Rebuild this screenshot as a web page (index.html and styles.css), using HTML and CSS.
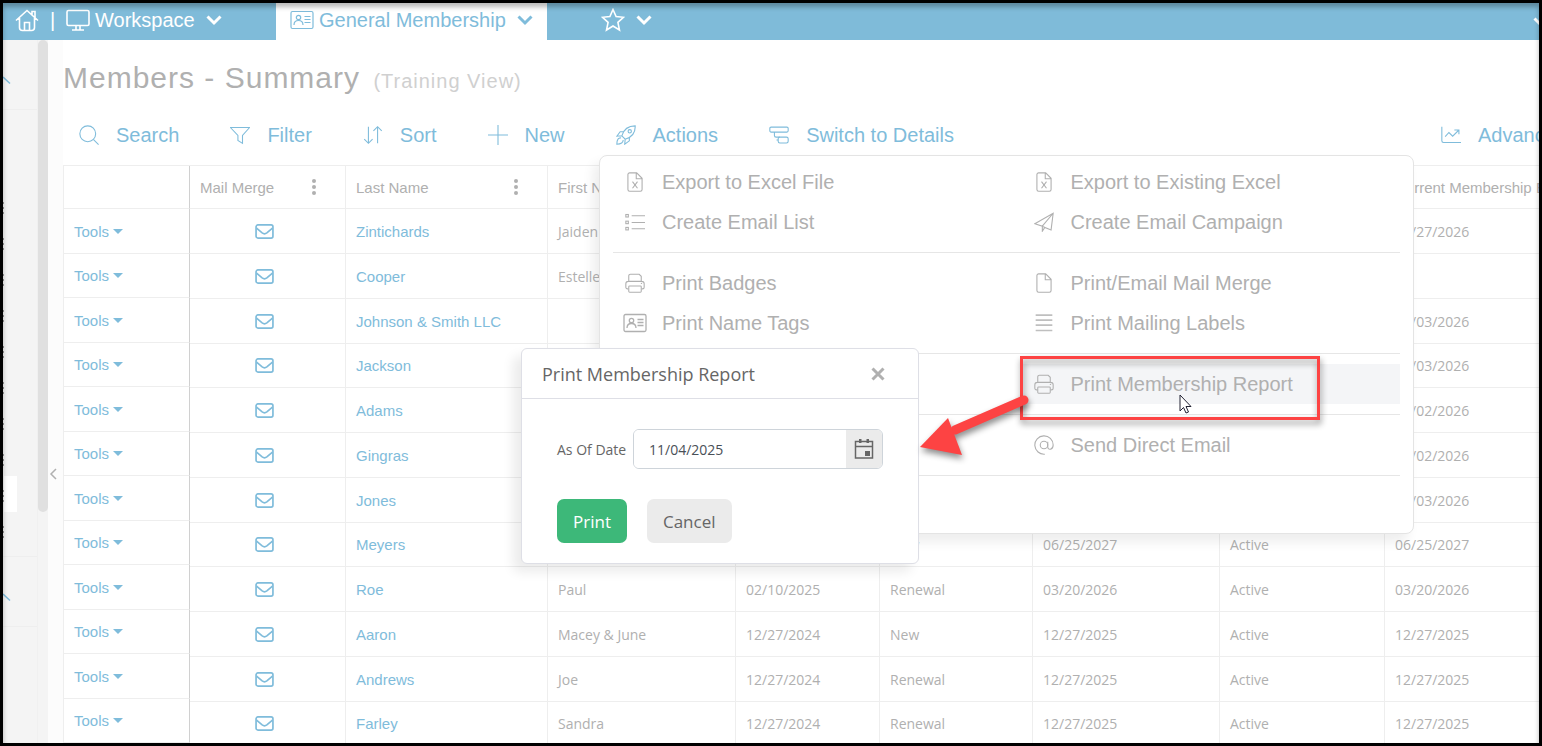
FILE: index.html
```html
<!DOCTYPE html>
<html lang="en">
<head>
    <meta charset="UTF-8">
    <meta name="viewport" content="width=device-width, initial-scale=1.0">
    <title>Members - Summary</title>
    <link rel="stylesheet" href="styles.css">
</head>
<body>
    <svg class="icon-defs" aria-hidden="true">
        <symbol id="i-home" viewBox="0 0 24 24"><path d="M1 12.5L12 2.5l11 10M4.500 10v9.500a3 3 0 0 0 3 3h9a3 3 0 0 0 3-3V10M9.500 22v-7.500h5V22M17 6.500V3.500h3v6"/></symbol>
        <symbol id="i-monitor" viewBox="0 0 24 24"><rect x="1" y="2.500" width="22" height="15" rx="1.500"/><path d="M10 18v4M14 18v4M6 22h12"/></symbol>
        <symbol id="i-card" viewBox="0 0 24 24"><rect x="1" y="3.500" width="22" height="17" rx="1.500"/><circle cx="8.500" cy="9.500" r="2.200"/><path d="M4 17c0-6 9-6 9 0M14.500 8.500h6M14.500 11.500h6M14.500 14.500h6"/></symbol>
        <symbol id="i-down" viewBox="0 0 16 16"><path d="M1.500 4.500L8 11l6.500-6.500"/></symbol>
        <symbol id="i-star" viewBox="0 0 24 24"><path d="M12 1.500l3.100 7 7.400.800-5.600 5 1.600 7.700L12 18l-6.500 4 1.600-7.700-5.600-5 7.400-.8z"/></symbol>
        <symbol id="i-search" viewBox="0 0 24 24"><circle cx="10.500" cy="10.500" r="9.500"/><path d="M17.500 17.500l6 6"/></symbol>
        <symbol id="i-filter" viewBox="0 0 24 24"><path d="M.500 3h23L15 12.500V22l-5.500-3.500v-6z"/></symbol>
        <symbol id="i-sort" viewBox="0 0 24 24"><path d="M6.500 2v20M1.500 17L6.500 22l5-5M17.500 22V2M12.500 7L17.500 2l5 5"/></symbol>
        <symbol id="i-plus" viewBox="0 0 24 24"><path d="M12 0v24M0 12h24"/></symbol>
        <symbol id="i-rocket" viewBox="0 0 24 24"><path d="M7 13C9 6 14 1 23 1 23.500 10 18 15 11 17zM9.500 8H5L1 13.500 7 13M16 14.500V19l-5.500 4 .500-6M6 15.500c-3-.5-5 2-5 7.500 5 0 8-2 7.500-5"/><circle cx="16.500" cy="7.500" r="2"/></symbol>
        <symbol id="i-switch" viewBox="0 0 24 24"><rect x="1" y="2.500" width="22" height="6" rx="1.500"/><rect x="11" y="14.500" width="12" height="7" rx="2"/><path d="M6.500 8.500v4a2 2 0 0 0 2 2H13M11 18H9"/></symbol>
        <symbol id="i-chart" viewBox="0 0 24 24"><path d="M1 2v17a2 2 0 0 0 2 2h21M5 14l4.500-5 4.500 4.500L21.500 6M16 6h5.500v5"/></symbol>
        <symbol id="i-excel" viewBox="0 0 24 24"><path d="M5.500 1h8.500l6.500 6.500V21a2 2 0 0 1-2 2h-13a2 2 0 0 1-2-2V3a2 2 0 0 1 2-2zM13.500 1v7h7M9 11.500l6 8M15 11.500l-6 8"/></symbol>
        <symbol id="i-page" viewBox="0 0 24 24"><path d="M5.500 1h8.500l6.500 6.500V21a2 2 0 0 1-2 2h-13a2 2 0 0 1-2-2V3a2 2 0 0 1 2-2zM13.500 1v7h7"/></symbol>
        <symbol id="i-list" viewBox="0 0 24 24"><rect x="1" y="3" width="3" height="3"/><rect x="1" y="11" width="3" height="3"/><rect x="1" y="18.500" width="3" height="3"/><path d="M8 4.500h16M8 12.500h16M8 20h16"/></symbol>
        <symbol id="i-plane" viewBox="0 0 24 24"><path d="M1 14L23 1.500 20.500 21.500 13 18.500 10 23V17zM23 1.500L10 17l3 1.500"/></symbol>
        <symbol id="i-printer" viewBox="0 0 24 24"><path d="M4.500 10V3.500a2 2 0 0 1 2-2h10.500l2.500 2.500v6M4 19H3a2 2 0 0 1-2-2v-4a3 3 0 0 1 3-3h16a3 3 0 0 1 3 3v4a2 2 0 0 1-2 2h-1"/><rect x="4.500" y="15.500" width="15" height="7.500" rx="1"/><path d="M19 12.500h1.500"/></symbol>
        <symbol id="i-lines" viewBox="0 0 24 24"><path d="M2 2.500h20M2 8.500h20M2 14.500h20M2 21h20"/></symbol>
        <symbol id="i-at" viewBox="0 0 24 24"><circle cx="12" cy="12" r="4.500"/><path d="M16.500 8v6.500c0 4 6.500 3.500 6.500-2.500A11 11 0 1 0 13 23"/></symbol>
        <symbol id="i-mail" viewBox="0 0 20 16"><rect x="1" y="1" width="18" height="14" rx="2"/><path d="M1.500 4.500l6 5c2 1.500 3 1.500 5 0l6-5"/></symbol>
        <symbol id="i-calendar" viewBox="0 0 20 20"><path d="M1.500 2.500h17v16.500h-17zM1.500 7.500h17"/><path d="M5 0h2.500v4H5zM12.500 0H15v4h-2.500zM11 12h5v5h-5z" fill="currentColor" stroke="none"/></symbol>
    </svg>

    <header class="topbar">
        <nav class="topbar-main">
            <a href="#" aria-label="Home"><svg class="icon icon-top"><use href="#i-home"/></svg></a>
            <span class="topbar-sep">|</span>
            <button class="top-button"><svg class="icon icon-top"><use href="#i-monitor"/></svg>Workspace<svg class="icon icon-down"><use href="#i-down"/></svg></button>
        </nav>
        <button class="top-button tab"><svg class="icon icon-top"><use href="#i-card"/></svg>General Membership<svg class="icon icon-down"><use href="#i-down"/></svg></button>
        <button class="top-button favorites" aria-label="Favorites"><svg class="icon icon-top"><use href="#i-star"/></svg><svg class="icon icon-down"><use href="#i-down"/></svg></button>
        <button class="top-button more" aria-label="More"><svg class="icon icon-down"><use href="#i-down"/></svg></button>
    </header>

    <div class="page">
        <aside class="sidebar">
            <div class="side-panels">
                <div class="side-panel side-panel-head"><svg class="side-chevron" viewBox="0 0 8 8"><path d="M0 1l7 6.500"/></svg></div>
                <div class="side-panel side-panel-list">
                    <div class="side-dots"></div>
                    <div class="side-item"></div>
                </div>
                <div class="side-panel side-panel-head"><svg class="side-chevron" viewBox="0 0 8 8"><path d="M0 1l7 6.500"/></svg></div>
            </div>
            <div class="scroll-thumb"></div>
        </aside>
        <button class="collapse" aria-label="Collapse"><svg viewBox="0 0 8 12"><path d="M7 1L2 6l5 5"/></svg></button>

        <main class="content">
            <h1>Members - Summary <small>(Training View)</small></h1>
            <div class="toolbar">
                <button><svg class="icon"><use href="#i-search"/></svg>Search</button>
                <button><svg class="icon"><use href="#i-filter"/></svg>Filter</button>
                <button><svg class="icon"><use href="#i-sort"/></svg>Sort</button>
                <button><svg class="icon"><use href="#i-plus"/></svg>New</button>
                <button><svg class="icon"><use href="#i-rocket"/></svg>Actions</button>
                <button><svg class="icon"><use href="#i-switch"/></svg>Switch to Details</button>
                <button class="advanced"><svg class="icon"><use href="#i-chart"/></svg>Advanced</button>
            </div>

            <div class="grid">
                <table class="grid-tools">
                    <thead><tr><th></th></tr></thead>
                    <tbody>
                        <tr><td><button>Tools</button></td></tr>
                        <tr><td><button>Tools</button></td></tr>
                        <tr><td><button>Tools</button></td></tr>
                        <tr><td><button>Tools</button></td></tr>
                        <tr><td><button>Tools</button></td></tr>
                        <tr><td><button>Tools</button></td></tr>
                        <tr><td><button>Tools</button></td></tr>
                        <tr><td><button>Tools</button></td></tr>
                        <tr><td><button>Tools</button></td></tr>
                        <tr><td><button>Tools</button></td></tr>
                        <tr><td><button>Tools</button></td></tr>
                        <tr><td><button>Tools</button></td></tr>
                    </tbody>
                </table>
                <table class="grid-data">
                    <colgroup>
                        <col class="col-mail"><col class="col-last"><col class="col-first"><col class="col-joined"><col class="col-type"><col class="col-expires"><col class="col-status"><col class="col-current">
                    </colgroup>
                    <thead>
                        <tr>
                            <th><div class="th-inner">Mail Merge<span class="dots"></span></div></th>
                            <th><div class="th-inner">Last Name<span class="dots"></span></div></th>
                            <th>First Name</th>
                            <th></th>
                            <th></th>
                            <th></th>
                            <th></th>
                            <th>Current Membership Expires</th>
                        </tr>
                    </thead>
                    <tbody>
                        <tr><td class="mail"><svg><use href="#i-mail"/></svg></td><td><a href="#">Zintichards</a></td><td>Jaiden</td><td></td><td></td><td></td><td></td><td>12/27/2026</td></tr>
                        <tr><td class="mail"><svg><use href="#i-mail"/></svg></td><td><a href="#">Cooper</a></td><td>Estelle</td><td></td><td></td><td></td><td></td><td></td></tr>
                        <tr><td class="mail"><svg><use href="#i-mail"/></svg></td><td><a href="#">Johnson &amp; Smith LLC</a></td><td></td><td></td><td></td><td></td><td></td><td>11/03/2026</td></tr>
                        <tr><td class="mail"><svg><use href="#i-mail"/></svg></td><td><a href="#">Jackson</a></td><td></td><td></td><td></td><td></td><td></td><td>11/03/2026</td></tr>
                        <tr><td class="mail"><svg><use href="#i-mail"/></svg></td><td><a href="#">Adams</a></td><td></td><td></td><td></td><td></td><td></td><td>11/02/2026</td></tr>
                        <tr><td class="mail"><svg><use href="#i-mail"/></svg></td><td><a href="#">Gingras</a></td><td></td><td></td><td></td><td></td><td></td><td>11/02/2026</td></tr>
                        <tr><td class="mail"><svg><use href="#i-mail"/></svg></td><td><a href="#">Jones</a></td><td></td><td></td><td></td><td></td><td></td><td>11/03/2026</td></tr>
                        <tr><td class="mail"><svg><use href="#i-mail"/></svg></td><td><a href="#">Meyers</a></td><td></td><td></td><td>New</td><td>06/25/2027</td><td>Active</td><td>06/25/2027</td></tr>
                        <tr><td class="mail"><svg><use href="#i-mail"/></svg></td><td><a href="#">Roe</a></td><td>Paul</td><td>02/10/2025</td><td>Renewal</td><td>03/20/2026</td><td>Active</td><td>03/20/2026</td></tr>
                        <tr><td class="mail"><svg><use href="#i-mail"/></svg></td><td><a href="#">Aaron</a></td><td>Macey &amp; June</td><td>12/27/2024</td><td>New</td><td>12/27/2025</td><td>Active</td><td>12/27/2025</td></tr>
                        <tr><td class="mail"><svg><use href="#i-mail"/></svg></td><td><a href="#">Andrews</a></td><td>Joe</td><td>12/27/2024</td><td>Renewal</td><td>12/27/2025</td><td>Active</td><td>12/27/2025</td></tr>
                        <tr><td class="mail"><svg><use href="#i-mail"/></svg></td><td><a href="#">Farley</a></td><td>Sandra</td><td>12/27/2024</td><td>Renewal</td><td>12/27/2025</td><td>Active</td><td>12/27/2025</td></tr>
                    </tbody>
                </table>
            </div>
        </main>
    </div>

    <div class="actions-menu">
        <div class="menu-group">
            <button><svg class="icon"><use href="#i-excel"/></svg>Export to Excel File</button>
            <button><svg class="icon"><use href="#i-excel"/></svg>Export to Existing Excel</button>
            <button><svg class="icon"><use href="#i-list"/></svg>Create Email List</button>
            <button><svg class="icon"><use href="#i-plane"/></svg>Create Email Campaign</button>
        </div>
        <div class="menu-group">
            <button><svg class="icon"><use href="#i-printer"/></svg>Print Badges</button>
            <button><svg class="icon"><use href="#i-page"/></svg>Print/Email Mail Merge</button>
            <button><svg class="icon icon-card"><use href="#i-card"/></svg>Print Name Tags</button>
            <button><svg class="icon icon-lines"><use href="#i-lines"/></svg>Print Mailing Labels</button>
        </div>
        <div class="menu-group">
            <button class="right active"><svg class="icon"><use href="#i-printer"/></svg>Print Membership Report</button>
        </div>
        <div class="menu-group">
            <button class="right"><svg class="icon"><use href="#i-at"/></svg>Send Direct Email</button>
        </div>
        <div class="menu-group"></div>
    </div>

    <form class="dialog" role="dialog" aria-labelledby="dialog-title">
        <div class="dialog-header">
            <h2 id="dialog-title">Print Membership Report</h2>
            <button type="button" class="close" aria-label="Close"><svg viewBox="0 0 14 14"><path d="M1.500 1.500l11 11M12.500 1.500l-11 11"/></svg></button>
        </div>
        <div class="dialog-body">
            <div class="field">
                <label for="as-of-date">As Of Date</label>
                <div class="date-box">
                    <input type="text" id="as-of-date" value="11/04/2025">
                    <button type="button" aria-label="Open calendar"><svg><use href="#i-calendar"/></svg></button>
                </div>
            </div>
            <div class="dialog-buttons">
                <button type="button" class="print">Print</button>
                <button type="button" class="cancel">Cancel</button>
            </div>
        </div>
    </form>

    <div class="callout"></div>
    <svg class="arrow" viewBox="0 0 120 70" aria-hidden="true">
        <path d="M109 13L40 43" stroke="#fd4343" stroke-width="9" stroke-linecap="round"/>
        <path d="M5 60L33 31 47 68z" fill="#fd4343"/>
    </svg>
    <svg class="pointer" viewBox="0 0 13 20" aria-hidden="true">
        <path d="M1 1v16l3.500-3.500 2.500 5.500 2.500-1-2.500-5.500H12z" fill="#fff" stroke="#223" stroke-width="1"/>
    </svg>
</body>
</html>
```

FILE: styles.css
```css
* {
    box-sizing: border-box;
}
body {
    position: relative;
    display: flex;
    flex-direction: column;
    height: 100vh;
    margin: 0;
    border: 3px solid #000;
    overflow: hidden;
    background-color: #fff;
    color: #b0b0b0;
    font-family: Arial, "Liberation Sans", sans-serif;
    font-size: 15px;
}
/* inner shadow of the frame */
body::after {
    content: "";
    position: absolute;
    inset: 0;
    box-shadow: inset 0 4px 5px rgba(0, 0, 0, .28);
    pointer-events: none;
}
button {
    padding: 0;
    border: none;
    background: none;
    color: inherit;
    font: inherit;
    white-space: nowrap;
    cursor: pointer;
}
a {
    color: #7fbcdb;
    text-decoration: none;
}
svg {
    display: block;
    flex: none;
    fill: none;
    stroke: currentColor;
}
.icon-defs {
    position: absolute;
    width: 0;
    height: 0;
}
.icon {
    width: 20px;
    height: 20px;
    stroke-width: 1.3;
}

/* top bar */
.topbar {
    display: flex;
    flex: none;
    height: 37px;
    background-color: #7fbbd9;
    color: #fff;
    font-size: 20px;
}
.topbar a {
    color: #fff;
}
.topbar-main {
    display: flex;
    align-items: center;
    width: 273px;
    padding: 0 0 3px 12px;
}
.topbar-sep {
    width: 27px;
    text-align: center;
}
.icon-top {
    width: 24px;
    height: 24px;
    stroke-width: 1.6;
}
.icon-down {
    width: 16px;
    height: 16px;
    margin-left: 6px;
    stroke-width: 3;
}
.top-button {
    display: flex;
    align-items: center;
    gap: 5px;
}
.tab {
    width: 271px;
    padding: 0 0 3px 14px;
    background-color: #fff;
    color: #7fbcdb;
}
.tab .icon-top {
    stroke-width: 1.2;
}
.favorites {
    padding: 0 0 3px 54px;
}
.more {
    margin-left: auto;
    margin-right: -10px;
}

/* left side */
.page {
    display: flex;
    flex: 1;
    min-height: 0;
}
.sidebar {
    display: flex;
    flex: none;
    width: 45px;
    background-color: #f4f4f4;
}
.side-panels {
    width: 35px;
    border-right: 1px solid #f0f0f0;
}
.side-panel {
    border-bottom: 1px solid #eee;
}
.side-panel-head {
    height: 70px;
    padding-top: 36px;
}
.side-panel-list {
    display: flex;
    align-items: flex-start;
    height: 447px;
}
.side-dots {
    width: 1px;
    height: 360px;
    margin-top: 80px;
    background-image: linear-gradient(transparent 12px, #999 12px, #999 14px, transparent 14px, transparent 17px, #999 17px, #999 19px, transparent 19px, transparent 22px, #999 22px, #999 24px, transparent 24px);
    background-size: 1px 36px;
}
.side-item {
    width: 13px;
    height: 36px;
    margin-top: 366px;
    background-color: #fff;
}
.side-chevron {
    width: 8px;
    height: 8px;
    color: #7fbcdb;
    stroke-width: 1.5;
}
.scroll-thumb {
    width: 10px;
    height: 472px;
    border-radius: 5px;
    background-color: #e0e0e0;
}
.collapse {
    display: flex;
    align-items: flex-start;
    flex: none;
    width: 15px;
    padding: 428px 0 0 1px;
    background-color: #fcfcfc;
}
.collapse svg {
    width: 8px;
    height: 12px;
    stroke-width: 1.5;
}

/* content */
.content {
    flex: 1;
    min-width: 0;
    padding-top: 18px;
    overflow: hidden;
}
h1 {
    margin: 0 0 17px;
    font-size: 30px;
    font-weight: normal;
    line-height: 40px;
    letter-spacing: 1px;
}
h1 small {
    margin-left: 4px;
    color: #d0d0d0;
    font-size: 20px;
    line-height: 20px;
}
.toolbar {
    display: flex;
    gap: 51px;
    height: 40px;
    margin-bottom: 10px;
    padding-left: 16px;
    color: #7fbcdb;
    font-size: 20px;
}
.toolbar button {
    display: flex;
    align-items: center;
    gap: 17px;
}
.toolbar .advanced {
    margin-left: auto;
    margin-right: -28px;
}

/* member grid */
.grid {
    display: flex;
    align-items: flex-start;
}
table {
    flex: none;
    table-layout: fixed;
    border-spacing: 0;
    border-top: 1px solid #eee;
}
th, td {
    height: 45px;
    padding: 0 10px;
    border-right: 1px solid #eee;
    border-bottom: 1px solid #eee;
    text-align: left;
    white-space: nowrap;
}
th {
    height: 43px;
    font-weight: normal;
}
.grid-tools {
    width: 127px;
    border-left: 1px solid #eee;
}
.grid-tools th, .grid-tools td {
    border-right-color: #d0d0d0;
}
.grid-tools tbody tr:nth-child(even) td {
    height: 44px;
}
.grid-tools button {
    display: flex;
    align-items: center;
    gap: 4px;
    color: #7fbcdb;
}
.grid-tools button::after {
    content: "";
    border: 5px solid transparent;
    border-top-color: #7fbcdb;
    border-bottom: none;
}
.grid-data {
    width: 1415px;
}
.grid-data tbody tr:nth-child(4n) td {
    height: 44px;
}
.grid-data td {
    font-family: "Segoe UI", "Open Sans", sans-serif;
    font-size: 14px;
}
.grid-data td a {
    font-family: Arial, "Liberation Sans", sans-serif;
    font-size: 15px;
}
.col-mail { width: 156px; }
.col-last { width: 202px; }
.col-first { width: 188px; }
.col-joined { width: 144px; }
.col-type { width: 153px; }
.col-expires { width: 187px; }
.col-status { width: 165px; }
.col-current { width: 220px; }
.th-inner {
    display: flex;
    align-items: center;
    justify-content: space-between;
    padding-right: 19px;
}
.dots, .dots::before, .dots::after {
    width: 4px;
    height: 4px;
    border-radius: 2px;
    background-color: #b0b0b0;
}
.dots {
    position: relative;
}
.dots::before, .dots::after {
    content: "";
    position: absolute;
    top: -6px;
}
.dots::after {
    top: 6px;
}
.mail svg {
    width: 19px;
    height: 15px;
    margin-left: 55px;
    color: #7fbcdb;
    stroke-width: 1.8;
}

/* actions menu */
.actions-menu {
    position: absolute;
    top: 152px;
    left: 596px;
    width: 815px;
    padding: 6px 13px 7px;
    border: 1px solid #e4e4e4;
    border-radius: 8px;
    background-color: #fff;
    box-shadow: -6px 8px 12px rgba(0, 0, 0, .07);
    font-size: 20px;
}
.menu-group {
    display: grid;
    grid-template-columns: 1fr 1fr;
    column-gap: 30px;
}
.menu-group + .menu-group {
    min-height: 51px;
    margin-top: 10px;
    padding-top: 10px;
    border-top: 1px solid #e6e6e6;
}
.menu-group button {
    display: flex;
    align-items: center;
    gap: 17px;
    height: 40px;
    padding-left: 12px;
}
.menu-group .right {
    grid-column: 2;
}
.menu-group .active {
    background-color: #f4f5f7;
}
.icon-card {
    width: 24px;
    height: 24px;
    margin: 0 -2px;
}
.icon-lines {
    stroke-width: 2;
    opacity: .8;
}

/* dialog */
.dialog {
    position: absolute;
    top: 345px;
    left: 518px;
    width: 398px;
    border: 1px solid #dedfe6;
    border-radius: 6px;
    background-color: #fff;
    box-shadow: -8px 8px 12px rgba(0, 0, 0, .08);
    color: #666;
    font-family: "Segoe UI", "Open Sans", sans-serif;
    font-size: 14px;
}
.dialog-header {
    display: flex;
    align-items: center;
    justify-content: space-between;
    height: 50px;
    padding: 0 33px 0 20px;
    border-bottom: 1px solid #dedfe6;
}
.dialog-header h2 {
    margin: 0;
    font-size: 18px;
    font-weight: normal;
    line-height: 24px;
}
.close svg {
    width: 14px;
    height: 14px;
    color: #b0b0b0;
    stroke-width: 3;
}
.dialog-body {
    padding: 30px 35px 20px;
}
.field {
    display: flex;
    align-items: center;
    justify-content: space-between;
    margin-bottom: 30px;
}
.date-box {
    display: flex;
    width: 250px;
    height: 40px;
    border: 1px solid #ced4da;
    border-radius: 6px;
    overflow: hidden;
}
.date-box input {
    flex: 1;
    min-width: 0;
    padding: 0 15px;
    border: none;
    outline: none;
    color: #495057;
    font: inherit;
}
.date-box button {
    display: flex;
    align-items: center;
    justify-content: center;
    width: 36px;
    background-color: #ebebeb;
}
.date-box svg {
    width: 20px;
    height: 20px;
    stroke-width: 1.5;
}
.dialog-buttons {
    display: flex;
    gap: 20px;
    font-size: 17px;
}
.dialog-buttons button {
    height: 44px;
    padding: 0 16px;
    border-radius: 7px;
}
.dialog-buttons .print {
    background-color: #3db879;
    color: #fff;
}
.dialog-buttons .cancel {
    background-color: #ebebeb;
}

/* annotations */
.callout {
    position: absolute;
    top: 353px;
    left: 1017px;
    width: 300px;
    height: 64px;
    border: 3px solid #fd4343;
    filter: drop-shadow(1px 4px 3px rgba(0, 0, 0, .45));
}
.arrow {
    position: absolute;
    top: 384px;
    left: 912px;
    width: 120px;
    height: 70px;
    overflow: visible;
    stroke: none;
    filter: drop-shadow(1px 4px 3px rgba(0, 0, 0, .45));
}
.pointer {
    position: absolute;
    top: 391px;
    left: 1176px;
    width: 13px;
    height: 20px;
}
```
